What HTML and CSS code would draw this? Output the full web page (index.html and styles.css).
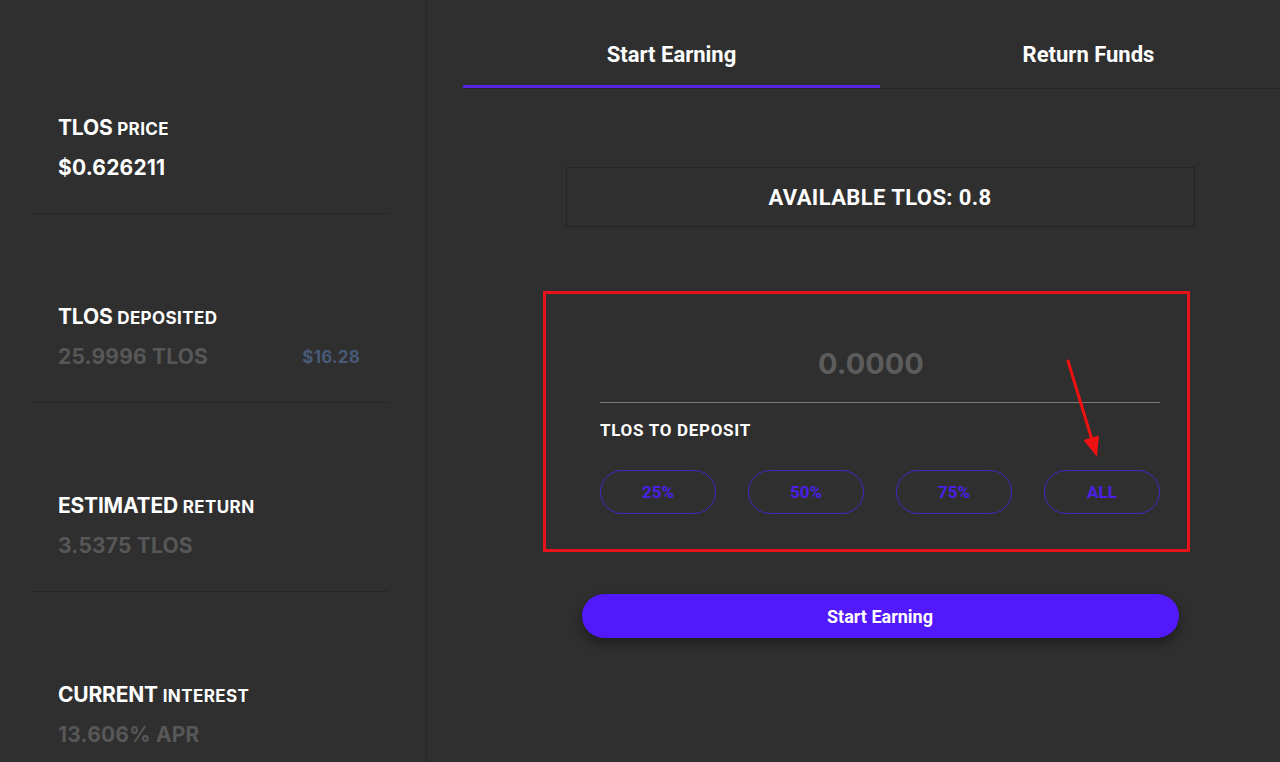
FILE: index.html
```html
<!DOCTYPE html>
<html lang="en">
<head>
<meta charset="UTF-8">
<meta name="viewport" content="width=device-width, initial-scale=1.0">
<title>TLOS Earn</title>
<link rel="stylesheet" href="styles.css">
</head>
<body>
<div class="page">
  <aside class="sidebar">
    <div class="stat">
      <div class="stat-label">TLOS <small>PRICE</small></div>
      <div class="stat-value white">$0.626211</div>
    </div>
    <div class="stat">
      <div class="stat-label">TLOS <small>DEPOSITED</small></div>
      <div class="stat-value">
        <span>25.9996 TLOS</span>
        <span class="usd">$16.28</span>
      </div>
    </div>
    <div class="stat">
      <div class="stat-label">ESTIMATED <small>RETURN</small></div>
      <div class="stat-value">3.5375 TLOS</div>
    </div>
    <div class="stat last">
      <div class="stat-label">CURRENT <small>INTEREST</small></div>
      <div class="stat-value">13.606% APR</div>
    </div>
  </aside>

  <main class="main">
    <div class="tabs">
      <div class="tab active">Start Earning</div>
      <div class="tab">Return Funds</div>
    </div>

    <div class="available">AVAILABLE TLOS: 0.8</div>

    <div class="deposit">
      <div class="amount">0.0000</div>
      <div class="deposit-label">TLOS TO DEPOSIT</div>
      <div class="percent-buttons">
        <button class="percent">25%</button>
        <button class="percent">50%</button>
        <button class="percent">75%</button>
        <button class="percent">ALL</button>
      </div>

      <!-- annotation drawn over the screenshot -->
      <div class="highlight-box"></div>
      <svg class="highlight-arrow" width="44" height="110" viewBox="0 0 44 110">
        <line x1="4" y1="3" x2="28" y2="82" stroke="#ee1111" stroke-width="3" stroke-linecap="round"/>
        <polygon points="19.5,82 35,77.5 33,99" fill="#ee1111"/>
      </svg>
    </div>

    <button class="start-button">Start Earning</button>
  </main>
</div>
</body>
</html>
```

FILE: styles.css
```css
body {
  margin: 0;
  background-color: #2f2f2f;
  color: #fff;
  font-family: Inter, "Open Sans", sans-serif;
  overflow: hidden;
}

.page {
  display: flex;
  height: 762px;
}

/* left column with the stats */
.sidebar {
  flex: none;
  width: 356px;
  padding: 25px 38px 0 32px;
  border-right: 1px solid #272727;
}

.stat {
  padding: 91px 28px 33px 26px;
  border-bottom: 1px solid #262626;
}

.stat.last {
  border-bottom: none;
}

.stat-label {
  height: 24px;
  font-size: 21px;
  font-weight: 700;
  line-height: 24px;
  letter-spacing: -0.2px;
}

.stat-label small {
  font-size: 17px;
  font-weight: 700;
  line-height: 0;
  letter-spacing: 0.4px;
}

.stat-value {
  display: flex;
  justify-content: space-between;
  height: 24px;
  margin-top: 16px;
  font-size: 21px;
  font-weight: 700;
  line-height: 24px;
  letter-spacing: 0.2px;
  color: #575757;
}

.stat-value.white {
  color: #fff;
}

.stat-value .usd {
  font-size: 17px;
  color: #485a78;
}

/* right column */
.main {
  flex: none;
  width: 834px;
  margin-left: 36px;
  display: flex;
  flex-direction: column;
  align-items: center;
}

.tabs {
  display: flex;
  width: 100%;
  border-bottom: 1px solid #262626;
}

.tab {
  flex: 1;
  text-align: center;
  font-family: Roboto, sans-serif;
  font-size: 22px;
  font-weight: 700;
  line-height: 26px;
  padding-top: 42px;
  height: 43px;
  border-bottom: 3px solid transparent;
}

.tab.active {
  border-bottom-color: #5726de;
}

.available {
  width: 627px;
  height: 58px;
  margin-top: 78px;
  border: 1px solid #242424;
  font-family: Roboto, sans-serif;
  font-size: 22px;
  font-weight: 700;
  letter-spacing: 0.4px;
  display: flex;
  align-items: center;
  justify-content: center;
}

.deposit {
  position: relative;
  width: 560px;
  margin-top: 117px;
}

.amount {
  text-align: center;
  font-size: 29px;
  font-weight: 700;
  color: #5c5c5c;
  line-height: 40px;
  padding: 0 18px 18px 0;
  border-bottom: 1px solid #7a7a7a;
}

.deposit-label {
  margin-top: 17px;
  font-family: Roboto, sans-serif;
  font-size: 17px;
  font-weight: 700;
  letter-spacing: 0.7px;
  line-height: 20px;
}

.percent-buttons {
  display: flex;
  justify-content: space-between;
  margin-top: 30px;
}

.percent {
  width: 116px;
  height: 44px;
  border: 1px solid #4624c4;
  border-radius: 22px;
  background: transparent;
  color: #4c1fe6;
  font-family: Roboto, sans-serif;
  font-size: 17px;
  font-weight: 700;
  cursor: pointer;
}

.highlight-box {
  position: absolute;
  left: -57px;
  top: -53px;
  width: 641px;
  height: 255px;
  border: 3px solid #e8121a;
}

.highlight-arrow {
  position: absolute;
  left: 464px;
  top: 14px;
}

.start-button {
  width: 597px;
  height: 44px;
  margin-top: 80px;
  border: none;
  border-radius: 22px;
  background-color: #5219fb;
  color: #fff;
  font-family: Roboto, sans-serif;
  font-size: 18px;
  font-weight: 700;
  box-shadow: 0 6px 12px rgba(0, 0, 0, 0.35);
  cursor: pointer;
}
```
